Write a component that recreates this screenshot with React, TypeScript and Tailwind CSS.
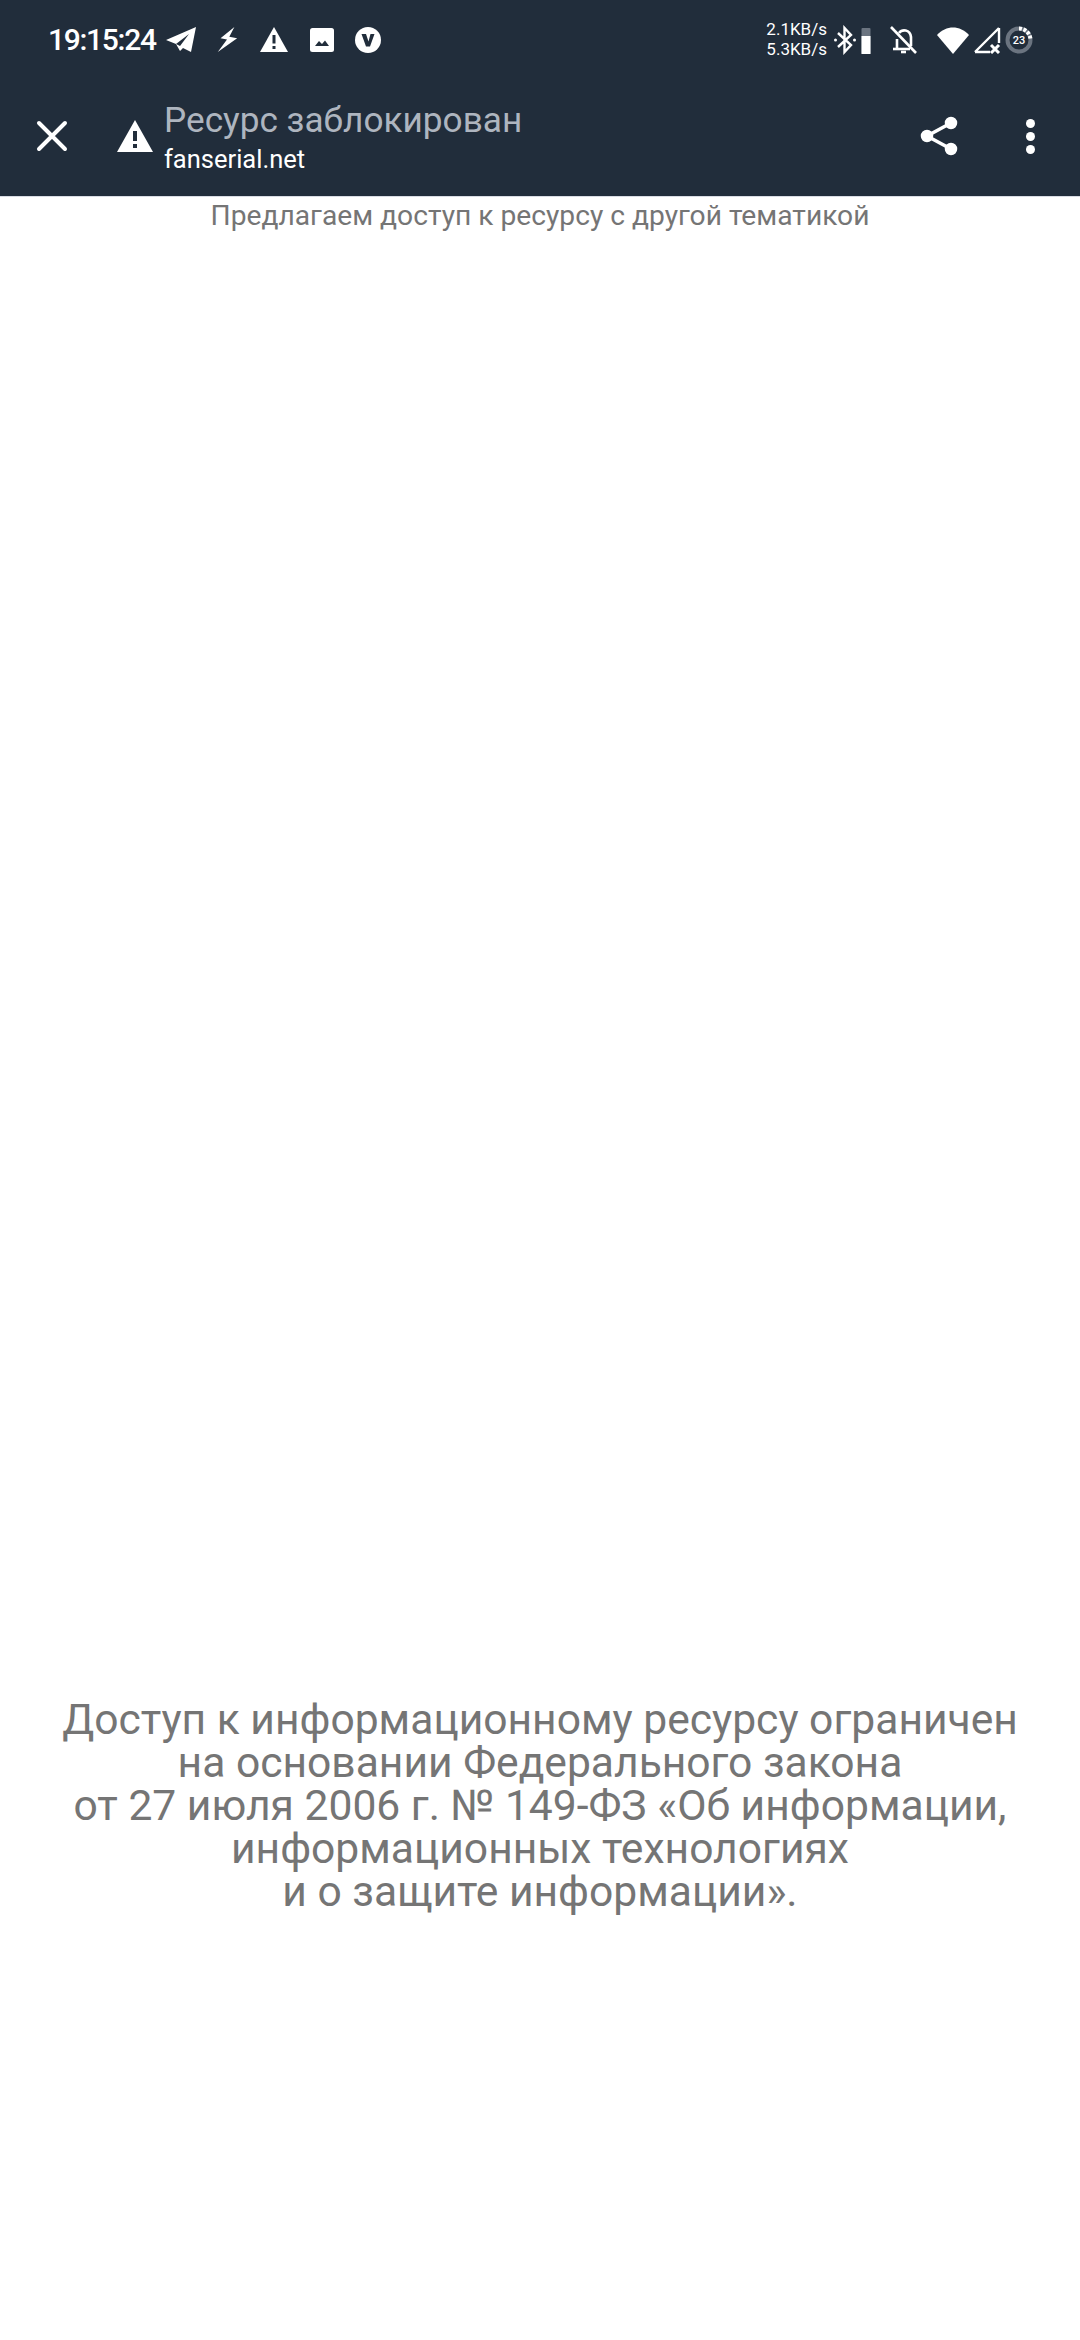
const FONT = { fontFamily: 'Roboto, sans-serif' }

function StatusIcons() {
  return (
    <div className="flex items-center">
      <svg className="ml-[9px] h-[30px] w-[32px]" viewBox="0 0 32 30" fill="white">
        <path d="M1 15 L31 2 L26 27 L18 23 L15 26 L11 19 Z" />
        <path d="M11 19 L24 9 L15 21 Z" fill="#212d3b" />
      </svg>
      <svg className="ml-[18px] h-[30px] w-[24px]" viewBox="0 0 26 30" fill="white">
        <path d="M21 1 L6 13 L13 14.5 L3 28 L24 13 L15.5 11.5 Z" />
      </svg>
      <svg className="ml-[20px] h-[28px] w-[30px]" viewBox="0 0 30 28" fill="white">
        <path d="M15 1 L29 26 L1 26 Z" />
        <path d="M13.5 9 H16.5 V17.5 H13.5 Z M13.5 20 H16.5 V23 H13.5 Z" fill="#212d3b" />
      </svg>
      <svg className="ml-[20px] h-[26px] w-[26px]" viewBox="0 0 26 26" fill="white">
        <rect x="1" y="1" width="24" height="24" rx="2.5" />
        <path d="M6 19 L10 14 L13 17 L16 13.5 L20 19 Z" fill="#212d3b" />
      </svg>
      <svg className="ml-[19px] h-[28px] w-[28px]" viewBox="0 0 28 28">
        <circle cx="14" cy="14" r="13" fill="white" />
        <path d="M7.5 8 H12 L14.5 15.5 L16.5 8 H20.5 L16 20.5 H12 Z" fill="#212d3b" />
      </svg>
    </div>
  )
}

function SystemIcons() {
  return (
    <div className="flex items-center">
      <div className="-mt-[2px] flex flex-col items-start text-[17px] leading-[20px] text-white">
        <span>2.1KB/s</span>
        <span>5.3KB/s</span>
      </div>
      <svg className="ml-[6px] h-[30px] w-[24px]" viewBox="0 0 24 30" fill="none" stroke="white" strokeWidth="2.4">
        <path d="M5 8 L18 20 L11.5 27 V3 L18 10 L5 22" />
        <circle cx="2.5" cy="15" r="1.5" fill="white" stroke="none" />
        <circle cx="21.5" cy="15" r="1.5" fill="white" stroke="none" />
      </svg>
      <svg className="ml-[4px] h-[28px] w-[10px]" viewBox="0 0 10 28">
        <rect x="0.5" y="2" width="9" height="26" rx="1" fill="#6b7480" />
        <rect x="0.5" y="10" width="9" height="18" fill="white" />
      </svg>
      <svg className="ml-[19px] h-[30px] w-[28px]" viewBox="0 0 28 30" fill="none" stroke="white" strokeWidth="2.6">
        <path d="M7 24 V14 M9 8 C12 4 20 4 21 12 V21" />
        <path d="M3 24 H20" />
        <path d="M11 27 H16" />
        <path d="M1 2 L26 28" />
      </svg>
      <svg className="ml-[18px] h-[28px] w-[34px]" viewBox="0 0 34 28" fill="white">
        <path d="M1 9 C10 -1 24 -1 33 9 L17 28 Z" />
      </svg>
      <svg className="ml-[3px] h-[28px] w-[28px]" viewBox="0 0 28 28" fill="none" stroke="white" strokeWidth="2.4">
        <path d="M26 2 V17 M2 26 L26 2 M2 26 H17" />
        <path d="M18 19 L26 27 M26 19 L18 27" strokeWidth="3" />
      </svg>
      <svg className="ml-[4px] h-[28px] w-[28px]" viewBox="0 0 28 28">
        <circle cx="14" cy="14" r="11.5" fill="none" stroke="#6b7480" strokeWidth="4" />
        <path d="M14 2.5 A11.5 11.5 0 0 1 25.5 14" fill="none" stroke="white" strokeWidth="4" strokeDasharray="3 1.5" />
        <text x="14" y="18" textAnchor="middle" fontSize="11" fontWeight="500" fill="white" style={FONT}>
          23
        </text>
      </svg>
    </div>
  )
}

export default function App() {
  return (
    <div className="flex min-h-[2340px] w-[1080px] flex-col bg-white" style={FONT}>
      <header className="flex h-[197px] flex-col border-b border-[#d8dce4] bg-[#212d3b]">
        <div className="flex h-[79px] items-center justify-between pl-[48px] pr-[47px]">
          <div className="flex items-center">
            <span className="text-[30px] font-medium leading-none tracking-[-1.3px] text-white">19:15:24</span>
            <StatusIcons />
          </div>
          <SystemIcons />
        </div>
        <div className="flex flex-1 items-center pb-[3px] pl-[36px] pr-[45px]">
          <svg className="h-[32px] w-[32px]" viewBox="0 0 32 32" stroke="white" strokeWidth="4" strokeLinecap="round">
            <path d="M3 3 L29 29 M29 3 L3 29" />
          </svg>
          <svg className="ml-[49px] h-[32px] w-[36px]" viewBox="0 0 36 32" fill="white">
            <path d="M18 0 L36 32 L0 32 Z" />
            <path d="M16 11 H20 V21 H16 Z M16 24 H20 V28 H16 Z" fill="#212d3b" />
          </svg>
          <div className="ml-[11px] flex translate-y-[2px] flex-col">
            <span className="-mt-[2px] text-[35.2px] leading-[40px] text-[#aeb5bf]">Ресурс заблокирован</span>
            <span className="mt-[4px] text-[25.5px] leading-[30px] text-white">fanserial.net</span>
          </div>
          <svg className="ml-auto h-[40px] w-[40px]" viewBox="0 0 40 40" fill="white" stroke="white" strokeWidth="3.5">
            <path d="M32 7 L8 20 L32 33" fill="none" />
            <circle cx="32" cy="7" r="4.5" />
            <circle cx="8" cy="20" r="4.5" />
            <circle cx="32" cy="33" r="4.5" />
          </svg>
          <div className="ml-[67px] flex flex-col gap-[4px]">
            <span className="h-[9px] w-[9px] rounded-full bg-white" />
            <span className="h-[9px] w-[9px] rounded-full bg-white" />
            <span className="h-[9px] w-[9px] rounded-full bg-white" />
          </div>
        </div>
      </header>
      <main className="flex flex-col items-center text-center text-[#757575]">
        <p className="mt-[2px] text-[28.2px] leading-[34px]">Предлагаем доступ к ресурсу с другой тематикой</p>
        <p className="mt-[1465px] text-[42.6px] leading-[43px]">
          Доступ к информационному ресурсу ограничен
          <br />
          на основании Федерального закона
          <br />
          от 27 июля 2006 г. № 149-ФЗ «Об информации,
          <br />
          информационных технологиях
          <br />
          и о защите информации».
        </p>
      </main>
    </div>
  )
}
